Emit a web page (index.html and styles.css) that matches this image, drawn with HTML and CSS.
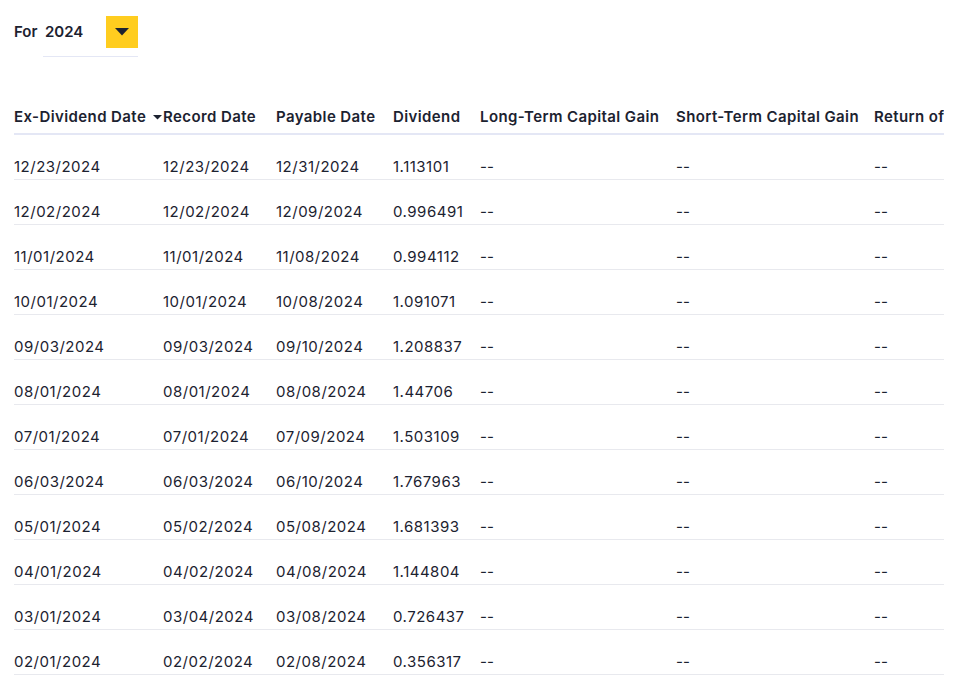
FILE: index.html
```html
<!DOCTYPE html>
<html>
<head>
<meta charset="utf-8">
<link rel="stylesheet" href="styles.css">
</head>
<body>
<div class="page">
  <div class="filter">
    <span class="filter-label">For</span>
    <div class="select">
      <span class="select-value">2024</span>
      <span class="select-btn"><svg width="14" height="8" viewBox="0 0 14 8"><path d="M0 0H14L7 7.5Z" fill="#1c2230"/></svg></span>
    </div>
  </div>
  <div class="table-wrap">
    <table class="divs">
      <colgroup>
        <col class="c1"><col class="c2"><col class="c3"><col class="c4"><col class="c5"><col class="c6"><col class="c7">
      </colgroup>
      <thead>
        <tr>
          <th><span class="sortable">Ex-Dividend Date<svg class="sort" width="9" height="5" viewBox="0 0 9 5"><path d="M0 0H9L4.5 4.5Z" fill="#1c2230"/></svg></span></th>
          <th>Record Date</th>
          <th>Payable Date</th>
          <th>Dividend</th>
          <th>Long-Term Capital Gain</th>
          <th>Short-Term Capital Gain</th>
          <th>Return of Capital</th>
        </tr>
      </thead>
      <tbody>
        <tr><td>12/23/2024</td><td>12/23/2024</td><td>12/31/2024</td><td>1.113101</td><td class="na">--</td><td class="na">--</td><td class="na">--</td></tr>
        <tr><td>12/02/2024</td><td>12/02/2024</td><td>12/09/2024</td><td>0.996491</td><td class="na">--</td><td class="na">--</td><td class="na">--</td></tr>
        <tr><td>11/01/2024</td><td>11/01/2024</td><td>11/08/2024</td><td>0.994112</td><td class="na">--</td><td class="na">--</td><td class="na">--</td></tr>
        <tr><td>10/01/2024</td><td>10/01/2024</td><td>10/08/2024</td><td>1.091071</td><td class="na">--</td><td class="na">--</td><td class="na">--</td></tr>
        <tr><td>09/03/2024</td><td>09/03/2024</td><td>09/10/2024</td><td>1.208837</td><td class="na">--</td><td class="na">--</td><td class="na">--</td></tr>
        <tr><td>08/01/2024</td><td>08/01/2024</td><td>08/08/2024</td><td>1.44706</td><td class="na">--</td><td class="na">--</td><td class="na">--</td></tr>
        <tr><td>07/01/2024</td><td>07/01/2024</td><td>07/09/2024</td><td>1.503109</td><td class="na">--</td><td class="na">--</td><td class="na">--</td></tr>
        <tr><td>06/03/2024</td><td>06/03/2024</td><td>06/10/2024</td><td>1.767963</td><td class="na">--</td><td class="na">--</td><td class="na">--</td></tr>
        <tr><td>05/01/2024</td><td>05/02/2024</td><td>05/08/2024</td><td>1.681393</td><td class="na">--</td><td class="na">--</td><td class="na">--</td></tr>
        <tr><td>04/01/2024</td><td>04/02/2024</td><td>04/08/2024</td><td>1.144804</td><td class="na">--</td><td class="na">--</td><td class="na">--</td></tr>
        <tr><td>03/01/2024</td><td>03/04/2024</td><td>03/08/2024</td><td>0.726437</td><td class="na">--</td><td class="na">--</td><td class="na">--</td></tr>
        <tr><td>02/01/2024</td><td>02/02/2024</td><td>02/08/2024</td><td>0.356317</td><td class="na">--</td><td class="na">--</td><td class="na">--</td></tr>
      </tbody>
    </table>
  </div>
</div>
</body>
</html>
```
FILE: styles.css
```css
html, body {
  margin: 0;
  padding: 0;
  background: #ffffff;
}
body {
  font-family: "Inter", "Liberation Sans", sans-serif;
  color: #1c2230;
  overflow: hidden;
}
.page {
  padding: 16px 11px 0 14px;
}
.filter {
  display: flex;
  align-items: flex-start;
  font-size: 15px;
  font-weight: 600;
}
.filter-label {
  line-height: 32px;
  width: 29px;
}
.select {
  display: flex;
  align-items: flex-start;
  justify-content: space-between;
  width: 95px;
  padding-bottom: 8px;
  border-bottom: 1px solid #e4e7f5;
}
.select-value {
  line-height: 32px;
  padding-left: 2px;
}
.select-btn {
  width: 32px;
  height: 32px;
  background: #ffcd1f;
  display: flex;
  align-items: center;
  justify-content: center;
}
.table-wrap {
  margin-top: 41px;
  width: 930px;
  overflow: hidden;
}
.divs {
  border-collapse: collapse;
  table-layout: fixed;
  width: 1010px;
}
.c1 { width: 149px; }
.c2 { width: 113px; }
.c3 { width: 117px; }
.c4 { width: 87px; }
.c5 { width: 196px; }
.c6 { width: 198px; }
.c7 { width: 150px; }
.divs th {
  text-align: left;
  font-size: 15px;
  font-weight: 600;
  letter-spacing: 0.4px;
  line-height: 20px;
  padding: 9px 0 6px 0;
  white-space: nowrap;
  border-bottom: 2px solid #e4e7f5;
}
.sortable {
  position: relative;
  display: inline-block;
}
.sort {
  position: absolute;
  left: 139px;
  top: 8px;
}
.divs td {
  font-size: 15px;
  font-weight: 400;
  letter-spacing: 0.5px;
  line-height: 20px;
  padding: 22px 0 2px 0;
  white-space: nowrap;
  border-bottom: 1px solid #e8e9ee;
}
.divs td.na {
  letter-spacing: 0;
}
```
